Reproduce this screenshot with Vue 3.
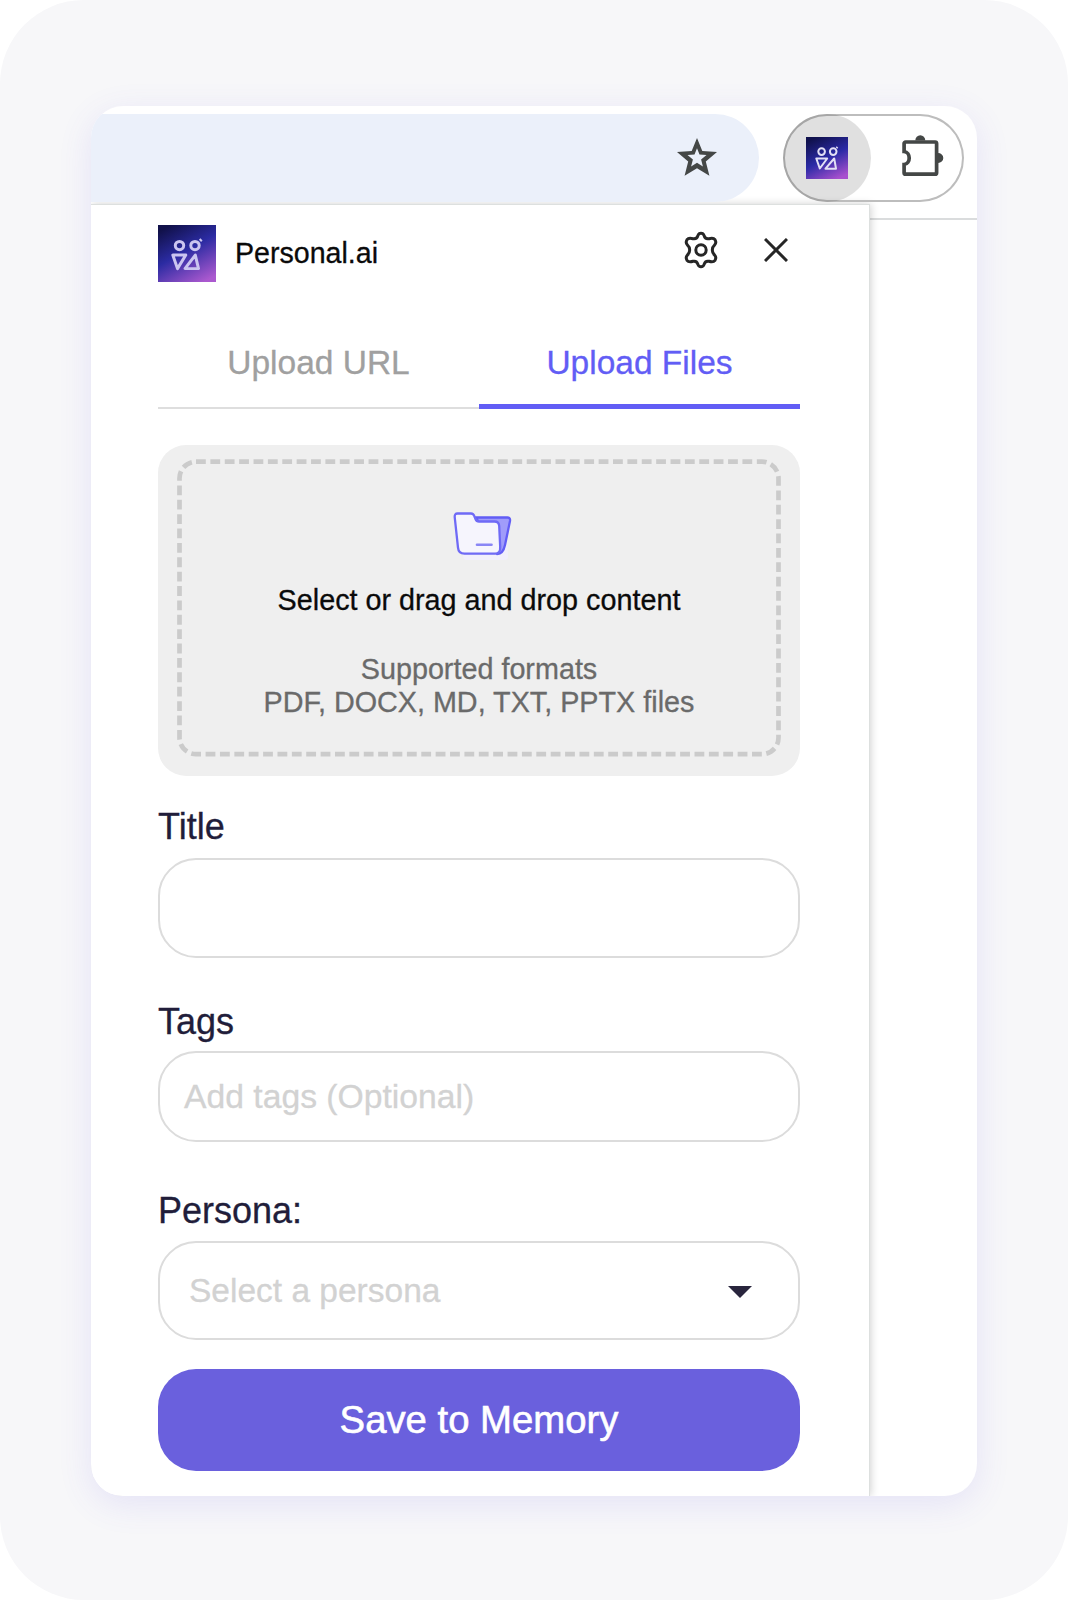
<script setup>
import { ref } from 'vue'

const tabs = ['Upload URL', 'Upload Files']
const active = ref('Upload Files')
</script>

<template>
  <main class="stage">
    <section class="card">
      <div class="toolbar">
        <div class="address">
          <svg class="star" width="40" height="38" viewBox="0 0 40 38">
            <path d="M20 0l5.300 12.900 14.700 1.200-11.200 9.500 3.600 14.100L20 30.200 7.600 37.700l3.600-14.100L0 14.100l14.700-1.200zM20 10.200l-2.500 6.400-7 .5 5.400 4.500-1.800 6.800 5.900-3.700 5.900 3.700-1.800-6.800 5.400-4.500-7-.5z" fill="#444746" />
          </svg>
        </div>
        <div class="extensions">
          <div class="ext-active">
            <svg width="42" height="42" viewBox="0 0 42 42">
              <defs>
                <linearGradient id="tileA" x1=".25" y1="0" x2=".75" y2="1">
                  <stop offset="0" stop-color="#10114d" /><stop offset=".5" stop-color="#2b2aa6" /><stop offset="1" stop-color="#a850ce" />
                </linearGradient>
              </defs>
              <rect width="42" height="42" fill="url(#tileA)" />
              <g fill="none" stroke="#e2dff5" stroke-width="2" stroke-linejoin="round">
                <circle cx="15.600" cy="14.600" r="3.300" /><circle cx="27.200" cy="14.600" r="3.300" />
                <path d="M30.500 11l1-1M10.300 21.500h10.900l-7.400 10zM19.500 31.700l8.700-10.200L30 31.700z" />
              </g>
            </svg>
          </div>
          <svg class="puzzle" width="44" height="44" viewBox="0 0 44 44">
            <path d="M5.600 9h29.500a1.500 1.500 0 0 1 1.500 1.500v29.200a1.500 1.500 0 0 1-1.500 1.500H5.600a1.500 1.500 0 0 1-1.500-1.500V31.500c6.800-.6 6.800-12.400 0-13V10.500A1.500 1.500 0 0 1 5.600 9z" fill="none" stroke="#444746" stroke-width="3.700" />
            <path d="M15.300 7.500a5 5.300 0 0 1 10 0zM38 20a5.300 5 0 0 1 0 10z" fill="#444746" />
          </svg>
        </div>
      </div>

      <div class="popup">
        <header class="head">
          <svg class="logo" width="58" height="57.500" viewBox="0 0 58 58" preserveAspectRatio="none">
            <defs>
              <linearGradient id="tileB" x1=".22" y1="0" x2=".78" y2="1">
                <stop offset="0" stop-color="#11114a" /><stop offset=".45" stop-color="#2b2ba2" /><stop offset="1" stop-color="#ab59cf" />
              </linearGradient>
            </defs>
            <rect width="58" height="58" fill="url(#tileB)" />
            <g class="marks">
              <circle cx="21.500" cy="20.800" r="4.200" /><circle cx="37" cy="20.800" r="4.200" />
              <path d="M42 16l1.500-1.500M14.800 30.300h13l-8.300 13.700zM27 44l10.300-13.700 3.200 13.700z" />
            </g>
          </svg>
          <h1 class="brand">Personal.ai</h1>
          <div class="actions">
            <svg class="gear" width="34" height="38" viewBox="0 0 34 38">
              <path d="M13.900 4.600Q14.700 2.200 17 2.200Q19.300 2.200 20.100 4.600Q21.200 8.500 25 7.700Q29.300 6.300 31 8.700Q32.700 11.500 30.700 13.800Q28.300 15.900 28.300 19Q28.300 22.100 30.700 24.200Q32.700 26.500 31 29.300Q29.300 31.700 25 30.300Q21.200 29.500 20.100 33.400Q19.300 35.800 17 35.800Q14.700 35.800 13.900 33.400Q12.800 29.500 9 30.300Q4.700 31.700 3 29.300Q1.300 26.500 3.300 24.200Q5.700 22.100 5.700 19Q5.700 15.900 3.300 13.800Q1.300 11.500 3 8.700Q4.700 6.300 9 7.700Q12.800 8.500 13.900 4.600Z" />
              <circle cx="17" cy="19" r="5.200" />
            </svg>
            <svg class="close" width="24" height="24" viewBox="0 0 24 24"><path d="M1 1l22 22M23 1L1 23" /></svg>
          </div>
        </header>

        <nav class="tabs">
          <button v-for="tab in tabs" :key="tab" class="tab" :class="{ on: tab === active }" @click="active = tab">{{ tab }}</button>
        </nav>

        <div class="drop">
          <svg class="dashes" width="642" height="331" viewBox="0 0 642 331">
            <rect x="21.500" y="16.700" width="599" height="292.500" rx="16.500" />
          </svg>
          <svg class="folder" width="60" height="54" viewBox="0 0 60 54">
            <path d="M10 44h38l6-18 1 20q0 3-4 3H14q-4 0-4-5z" fill="#f1effb" />
            <path d="M23 6.500h31.500q3 0 2.500 3.500l-5 24q-1.800 9-8 9z" fill="#a09cfa" stroke="#625df5" stroke-width="2.300" stroke-linejoin="round" />
            <path d="M4.500 2.500h13.500q2.500 0 3.500 3l1 2.500q1 2.500 3.500 2.500h15.500q4.500 0 4.700 4.500l1 21q.3 6.700-5 6.700H11.500q-6 0-6.500-6L1.700 6Q1.500 2.500 4.500 2.500z" fill="#f6f5fd" stroke="#6f6af6" stroke-width="2.300" />
            <path d="M24 33.700h14.500" stroke="#8a86f5" stroke-width="2.600" stroke-linecap="round" />
          </svg>
          <p class="lead">Select or drag and drop content</p>
          <p class="formats">Supported formats<br />PDF, DOCX, MD, TXT, PPTX files</p>
        </div>

        <label class="label title-label">Title</label>
        <div class="field title-field"></div>
        <label class="label tags-label">Tags</label>
        <div class="field tags-field">Add tags (Optional)</div>
        <label class="label persona-label">Persona:</label>
        <div class="field persona-field">
          <span>Select a persona</span>
          <svg class="caret" width="24" height="12" viewBox="0 0 24 12"><path d="M0 0h24L12 12z" fill="#29253d" /></svg>
        </div>
        <button class="save">Save to Memory</button>
      </div>
    </section>
  </main>
</template>

<style>
body {
  margin: 0;
  background: #fff;
}
</style>

<style scoped>
.stage {
  box-sizing: border-box;
  width: 1068px;
  height: 1600px;
  padding: 106px 91px 104px;
  border-radius: 84px;
  background: #f7f7f9;
  font-family: "Liberation Sans", Arial, sans-serif;
  -webkit-text-stroke: 0.3px currentColor;
}
.card {
  box-sizing: border-box;
  height: 1390px;
  width: 886px;
  border-radius: 32px;
  overflow: hidden;
  background: linear-gradient(#dadcdd, #dadcdd) 0 112px / 100% 2px no-repeat #fff;
  box-shadow: 0 8px 34px rgba(98, 80, 230, 0.12);
}
svg {
  display: block;
  flex: none;
}
.toolbar {
  display: flex;
  height: 98px;
  box-sizing: border-box;
  padding-top: 8px;
  gap: 24px;
}
.address {
  display: flex;
  justify-content: flex-end;
  box-sizing: border-box;
  width: 668px;
  height: 88px;
  padding: 24px 42px 0 0;
  background: #ebf0fa;
  border-radius: 0 44px 44px 0;
}
.extensions {
  display: flex;
  box-sizing: border-box;
  width: 181px;
  height: 88px;
  border-radius: 44px;
  box-shadow: inset 0 0 0 2px #bdbdbd;
}
.ext-active {
  display: flex;
  align-items: center;
  justify-content: center;
  width: 88px;
  height: 88px;
  border-radius: 50%;
  background: rgba(0, 0, 0, 0.12);
}
.puzzle {
  margin: 19px 0 0 29px;
}
.popup {
  box-sizing: border-box;
  width: 779px;
  height: 1292px;
  padding: 20px 69px 0 67px;
  border-top: 1px solid #dde0df;
  border-right: 1px solid #dde0df;
  background: #fff;
  box-shadow: 1px 0 8px rgba(0, 0, 0, 0.18);
}
.head {
  display: flex;
  height: 58px;
}
.logo {
  margin-top: -0.5px;
}
.marks {
  fill: none;
  stroke: #cbc5f0;
  stroke-width: 3;
  stroke-linejoin: round;
  filter: blur(0.7px);
}
.brand {
  margin: 12px 0 0 19px;
  font-size: 28.6px;
  line-height: 32px;
  font-weight: 400;
  color: #0a0a0a;
}
.actions {
  display: flex;
  margin-left: auto;
  padding-right: 12px;
  gap: 46px;
}
.gear {
  margin-top: 5.5px;
  fill: none;
  stroke: #262626;
  stroke-width: 3;
}
.close {
  margin-top: 12.5px;
  fill: none;
  stroke: #262626;
  stroke-width: 3;
}
.tabs {
  display: flex;
  height: 96px;
  margin-top: 30px;
}
.tab {
  flex: 1;
  padding: 8px 0 3px;
  border: 0;
  border-bottom: 2px solid #dedede;
  background: none;
  font: 33.5px/1 "Liberation Sans", Arial, sans-serif;
  -webkit-text-stroke: 0.3px currentColor;
  color: #a0a0a0;
}
.tab.on {
  padding-bottom: 0;
  border-bottom: 5px solid #625df5;
  color: #625df5;
}
.drop {
  position: relative;
  display: flex;
  flex-direction: column;
  align-items: center;
  box-sizing: border-box;
  height: 331px;
  margin-top: 36px;
  padding-top: 66px;
  border-radius: 28px;
  background: #efefef;
}
.dashes {
  position: absolute;
  inset: 0;
  fill: none;
  stroke: #cbcbcb;
  stroke-width: 4.7;
  stroke-dasharray: 9.8 4.58;
}
.folder {
  margin-left: 7px;
}
.lead,
.formats {
  margin: 19px 0 0;
  font-size: 28.75px;
  line-height: 33px;
  color: #0a0a0a;
  text-align: center;
}
.formats {
  margin-top: 36px;
  color: #6a6a6a;
}
.label {
  display: block;
  font-size: 36px;
  line-height: 42px;
  color: #211d3a;
}
.title-label {
  margin-top: 30px;
}
.field {
  box-sizing: border-box;
  border: 2px solid #dcdcdc;
  border-radius: 38px;
  font-size: 33.7px;
  color: #d2d2d2;
}
.title-field {
  height: 100px;
  margin-top: 10px;
}
.tags-label {
  margin-top: 43px;
}
.tags-field {
  height: 91px;
  margin-top: 8px;
  padding-left: 24px;
  line-height: 86px;
}
.persona-label {
  margin-top: 48px;
}
.persona-field {
  display: flex;
  align-items: center;
  justify-content: space-between;
  height: 99px;
  margin-top: 9px;
  padding: 0 46px 0 29px;
  font-size: 33.5px;
}
.caret {
  margin-top: 2px;
}
.save {
  display: block;
  width: 642px;
  height: 102px;
  margin-top: 29px;
  padding: 0;
  border: 0;
  border-radius: 38px;
  background: #6a60dd;
  font: 38.3px/1 "Liberation Sans", Arial, sans-serif;
  -webkit-text-stroke: 0.6px #fff;
  color: #fff;
}
</style>
